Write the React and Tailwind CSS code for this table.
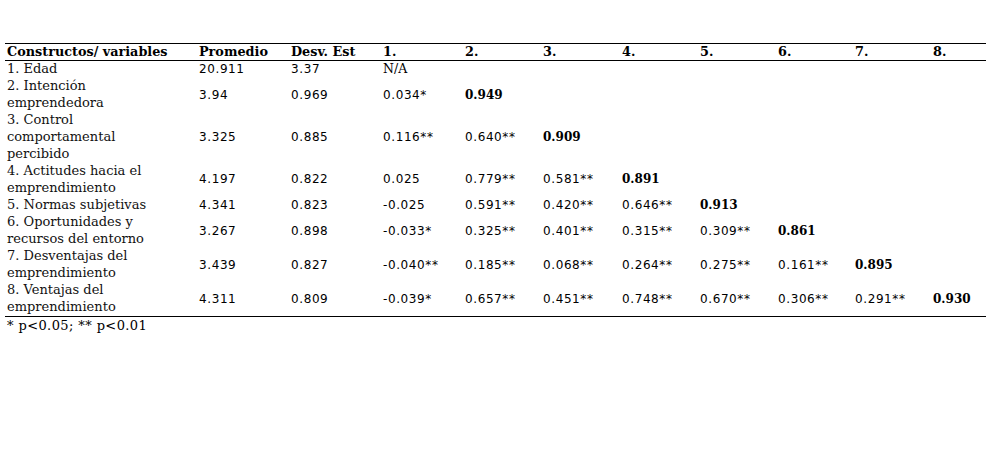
import React from "react";

const COLS = "grid grid-cols-[192px_92px_92px_82px_78px_79px_78px_78px_77px_78px_1fr]";

const rows = [
  { label: ["1. Edad"], mean: "20.911", sd: "3.37", vals: ["N/A"] },
  { label: ["2. Intención", "emprendedora"], mean: "3.94", sd: "0.969", vals: ["0.034*", "0.949"] },
  { label: ["3. Control", "comportamental", "percibido"], mean: "3.325", sd: "0.885", vals: ["0.116**", "0.640**", "0.909"] },
  { label: ["4. Actitudes hacia el", "emprendimiento"], mean: "4.197", sd: "0.822", vals: ["0.025", "0.779**", "0.581**", "0.891"] },
  { label: ["5. Normas subjetivas"], mean: "4.341", sd: "0.823", vals: ["-0.025", "0.591**", "0.420**", "0.646**", "0.913"] },
  { label: ["6. Oportunidades y", "recursos del entorno"], mean: "3.267", sd: "0.898", vals: ["-0.033*", "0.325**", "0.401**", "0.315**", "0.309**", "0.861"] },
  { label: ["7. Desventajas del", "emprendimiento"], mean: "3.439", sd: "0.827", vals: ["-0.040**", "0.185**", "0.068**", "0.264**", "0.275**", "0.161**", "0.895"] },
  { label: ["8. Ventajas del", "emprendimiento"], mean: "4.311", sd: "0.809", vals: ["-0.039*", "0.657**", "0.451**", "0.748**", "0.670**", "0.306**", "0.291**", "0.930"] },
];

const serif = "font-['DejaVu_Serif',serif]";
const sans = "font-['DejaVu_Sans',sans-serif] text-[12px] tracking-[0.6px]";

function Num({ children, bold, na }) {
  if (na) return <div className={`${serif} text-[12.5px] self-center pl-[2px]`}>{children}</div>;
  if (bold) return <div className={`${serif} font-bold text-[12px] self-center pl-[2px]`}>{children}</div>;
  return <div className={`${sans} self-center pl-[2px]`}>{children}</div>;
}

export default function App() {
  const heads = ["Constructos/ variables", "Promedio", "Desv. Est", "1.", "2.", "3.", "4.", "5.", "6.", "7.", "8."];
  return (
    <div className="w-[991px] h-[458px] bg-white text-black">
      <div className="pt-[43px] pl-[5px] w-[986px]">
        <div className="border-t-[1.5px] border-b-[1.5px] border-black">
          <div className={`${COLS} border-b-[1.5px] border-black h-[17px] items-center`}>
            {heads.map((h) => (
              <div key={h} className={`${serif} font-bold text-[12.8px] leading-[16px] pl-[2px]`}>{h}</div>
            ))}
          </div>
          {rows.map((r, i) => (
            <div key={i} className={`${COLS} leading-[16.9px] pb-[0.2px]`}>
              <div className={`${serif} text-[13px] pl-[2px] text-[#111]`}>
                {r.label.map((l) => <div key={l}>{l}</div>)}
              </div>
              <Num>{r.mean}</Num>
              <Num>{r.sd}</Num>
              {r.vals.map((v, j) => (
                <Num key={j} bold={j === r.vals.length - 1 && j > 0} na={v === "N/A"}>
                  {v}
                </Num>
              ))}
            </div>
          ))}
        </div>
        <div className={`${serif} text-[13px] tracking-[0.4px] pl-[2px] leading-[17px]`}>* p&lt;0.05; ** p&lt;0.01</div>
      </div>
    </div>
  );
}
